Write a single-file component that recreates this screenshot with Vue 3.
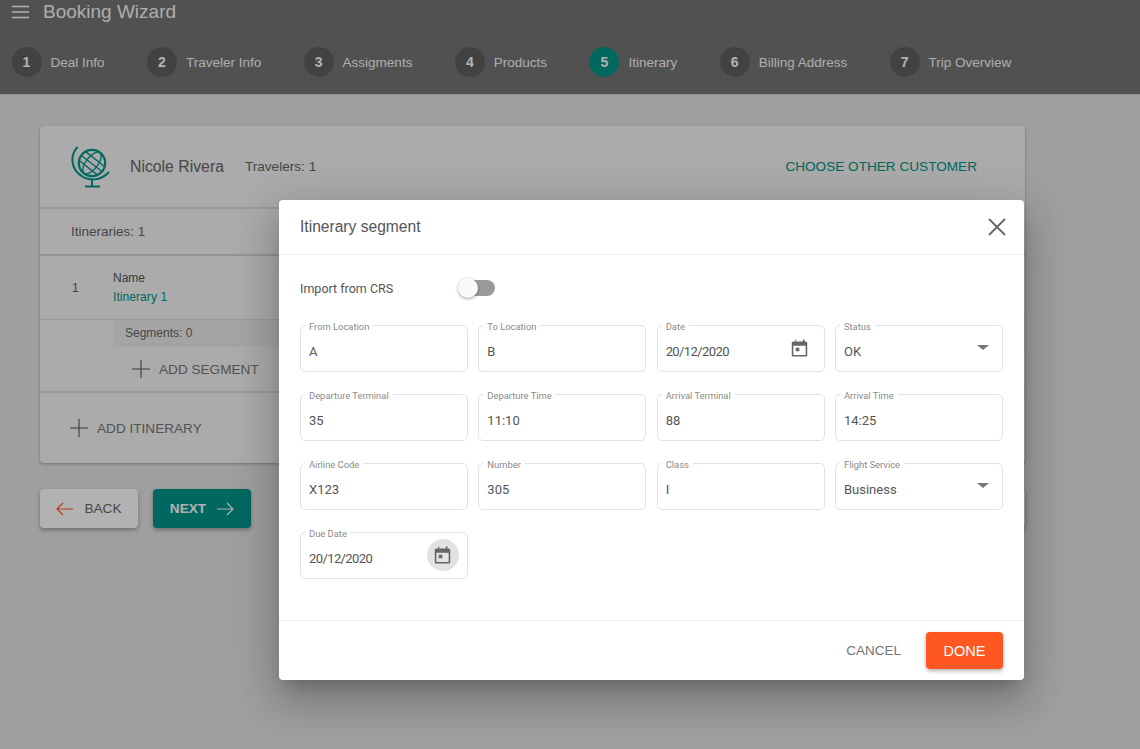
<template>
  <div class="page">
    <header class="topbar">
      <div class="title-row">
        <svg class="menu-icon" width="18" height="14" viewBox="0 0 18 14">
          <path d="M0 1.5h17M0 7h17M0 12.5h17" stroke="#fff" stroke-width="1.6" fill="none" />
        </svg>
        <span class="app-title">Booking Wizard</span>
      </div>
      <nav class="steps">
        <div v-for="(step, i) in steps" :key="step" class="step" :class="{ active: i === 4 }">
          <span class="step-num">{{ i + 1 }}</span>
          <span class="step-label">{{ step }}</span>
        </div>
      </nav>
    </header>

    <main class="content">
      <section class="card">
        <div class="customer">
          <svg class="globe" width="40" height="42" viewBox="0 0 40 42" fill="none" stroke="#009688">
            <circle cx="21" cy="17" r="13.2" stroke-width="2.2" />
            <g stroke-width="1.3" transform="rotate(38 21 17)">
              <ellipse cx="21" cy="17" rx="6" ry="13" />
              <path d="M8.5 12h25M8 17.5h26M9 23h24" />
            </g>
            <path d="M6.5 1C-1 9 0 21 8 28c9 8 22 7 30-2" stroke-width="2" />
            <path d="M21 34v6M14 40.5h15" stroke-width="2" />
          </svg>
          <span class="customer-name">Nicole Rivera</span>
          <span class="travelers">Travelers: 1</span>
          <a class="choose-link">CHOOSE OTHER CUSTOMER</a>
        </div>
        <div class="itineraries-head">Itineraries: 1</div>
        <div class="itinerary">
          <span class="itinerary-index">1</span>
          <div>
            <div class="itinerary-key">Name</div>
            <div class="itinerary-name">Itinerary 1</div>
          </div>
        </div>
        <div class="segments">Segments: 0</div>
        <button class="flat-btn add-segment">
          <svg width="18" height="18" viewBox="0 0 18 18"><path d="M9 0v18M0 9h18" stroke="#555" stroke-width="1.1" /></svg>
          ADD SEGMENT
        </button>
        <button class="flat-btn add-itinerary">
          <svg width="18" height="18" viewBox="0 0 18 18"><path d="M9 0v18M0 9h18" stroke="#555" stroke-width="1.1" /></svg>
          ADD ITINERARY
        </button>
      </section>

      <div class="nav-buttons">
        <button class="nav-btn back">
          <svg width="18" height="14" viewBox="0 0 18 14" fill="none"><path d="M17 7H1M7 1L1 7l6 6" stroke="#ff5722" stroke-width="1.2" /></svg>
          BACK
        </button>
        <button class="nav-btn next">
          NEXT
          <svg width="18" height="14" viewBox="0 0 18 14" fill="none"><path d="M1 7h16M11 1l6 6-6 6" stroke="#fff" stroke-width="1.2" /></svg>
        </button>
        <button class="nav-btn behind"></button>
      </div>
    </main>

    <div class="scrim">
      <div class="dialog">
        <div class="dialog-head">
          <span>Itinerary segment</span>
          <svg width="18" height="18" viewBox="0 0 18 18"><path d="M1 1l16 16M17 1L1 17" stroke="#666" stroke-width="1.8" /></svg>
        </div>
        <div class="dialog-body">
          <div class="import-row">
            <span class="import-label">Import from CRS</span>
            <span class="switch"><span class="switch-thumb"></span></span>
          </div>
          <div class="form-grid">
            <div v-for="f in fields" :key="f.label" class="field">
              <span class="field-label">{{ f.label }}</span>
              <span class="field-value" :class="{ 'date-value': f.icon === 'date' }">{{ f.value }}</span>
              <span v-if="f.icon === 'date'" class="field-icon" :class="{ focused: f.focused }">
                <svg width="17" height="18" viewBox="0 0 18 19">
                  <path fill="#666" d="M15.5 2.5h-1.2V.5h-1.8v2h-7v-2H4.600v2H2.500C1.500 2.500.8 3.300.8 4.300v12.500c0 1 .7 1.700 1.700 1.700h13c1 0 1.700-.7 1.700-1.700V4.300c0-1-.7-1.800-1.700-1.800zm0 14.300h-13V7h13v9.800zM5 9.200h3.800v3.800H5z" />
                </svg>
              </span>
              <span v-if="f.icon === 'select'" class="field-arrow"></span>
            </div>
          </div>
        </div>
        <div class="dialog-foot">
          <button class="cancel">CANCEL</button>
          <button class="done">DONE</button>
        </div>
      </div>
    </div>
  </div>
</template>

<script setup>
const steps = ['Deal Info', 'Traveler Info', 'Assigments', 'Products', 'Itinerary', 'Billing Address', 'Trip Overview']

const fields = [
  { label: 'From Location', value: 'A' },
  { label: 'To Location', value: 'B' },
  { label: 'Date', value: '20/12/2020', icon: 'date' },
  { label: 'Status', value: 'OK', icon: 'select' },
  { label: 'Departure Terminal', value: '35' },
  { label: 'Departure Time', value: '11:10' },
  { label: 'Arrival Terminal', value: '88' },
  { label: 'Arrival Time', value: '14:25' },
  { label: 'Airline Code', value: 'X123' },
  { label: 'Number', value: '305' },
  { label: 'Class', value: 'I' },
  { label: 'Flight Service', value: 'Business', icon: 'select' },
  { label: 'Due Date', value: '20/12/2020', icon: 'date', focused: true }
]
</script>

<style>
html,
body {
  margin: 0;
  height: 100%;
  overflow: hidden;
}
</style>

<style scoped>
.page {
  position: relative;
  height: 749px;
  overflow: hidden;
  background: #e4e4e4;
  font-family: "Liberation Sans", Arial, sans-serif;
  color: #333;
}

.topbar {
  height: 95px;
  background: #747474;
  color: #fff;
  box-sizing: border-box;
  border-bottom: 1px solid #cfcfcf;
}

.title-row {
  height: 24px;
  display: flex;
  align-items: center;
  gap: 13px;
  padding-left: 12px;
}

.menu-icon {
  flex: none;
}

.app-title {
  font-size: 19px;
  opacity: 0.95;
}

.steps {
  display: flex;
  gap: 42.4px;
  padding: 23px 0 0 11.5px;
}

.step {
  display: flex;
  align-items: center;
  gap: 9px;
}

.step-num {
  width: 30px;
  height: 30px;
  border-radius: 50%;
  background: #5f5f5f;
  display: flex;
  align-items: center;
  justify-content: center;
  font-size: 14px;
  font-weight: 700;
}

.step.active .step-num {
  background: #009688;
}

.step-label {
  font-size: 13.5px;
  opacity: 0.95;
}

.content {
  padding: 31px 115px 0 40px;
}

.card {
  background: #f5f5f5;
  border-radius: 4px;
  height: 337px;
  box-shadow: 0 1px 3px rgba(0, 0, 0, 0.3);
}

.customer {
  height: 83px;
  display: flex;
  align-items: center;
  padding: 0 48px 0 31px;
  border-bottom: 2px solid #dcdcdc;
  box-sizing: border-box;
}

.globe {
  flex: none;
  margin-right: 19px;
}

.customer-name {
  font-size: 15.8px;
  color: #666;
  margin-right: 21px;
}

.travelers {
  font-size: 13.6px;
  color: #666;
}

.choose-link {
  margin-left: auto;
  font-size: 13.6px;
  color: #009688;
}

.itineraries-head {
  height: 47px;
  line-height: 45px;
  padding-left: 31px;
  font-size: 13.5px;
  color: #666;
  border-bottom: 2px solid #d4d4d4;
  box-sizing: border-box;
}

.itinerary {
  height: 64px;
  display: flex;
  align-items: center;
  padding-left: 32px;
  font-size: 12px;
  color: #555;
  border-bottom: 1px solid #dcdcdc;
  box-sizing: border-box;
}

.itinerary-index {
  width: 41px;
}

.itinerary-key {
  margin-bottom: 5px;
}

.itinerary-name {
  color: #009688;
  font-size: 12.2px;
}

.segments {
  margin-left: 73px;
  height: 27px;
  line-height: 27px;
  padding-left: 12px;
  font-size: 12px;
  color: #666;
  background: #ebebeb;
}

.flat-btn {
  display: flex;
  align-items: center;
  border: 0;
  background: none;
  padding: 0;
  font-family: inherit;
  font-size: 13.6px;
  color: #777;
}

.add-segment {
  gap: 9px;
  height: 46px;
  width: 100%;
  padding-left: 92px;
  border-bottom: 2px solid #dcdcdc;
  box-sizing: border-box;
}

.add-itinerary {
  gap: 9px;
  height: 70px;
  padding-left: 30px;
}

.nav-buttons {
  display: flex;
  gap: 15px;
  margin-top: 26px;
}

.nav-btn {
  width: 98px;
  height: 39px;
  border: 0;
  border-radius: 4px;
  display: flex;
  align-items: center;
  justify-content: center;
  gap: 10px;
  font-family: inherit;
  font-size: 13.6px;
  box-shadow: 0 2px 4px rgba(0, 0, 0, 0.3);
}

.back {
  background: #fff;
  color: #666;
}

.next {
  background: #009688;
  color: #fff;
  font-weight: 700;
}

.behind {
  margin-left: auto;
  background: #f5f5f5;
}

.scrim {
  position: absolute;
  inset: 0;
  background: rgba(0, 0, 0, 0.3);
  padding: 200px 116px 0 279px;
  box-sizing: border-box;
}

.dialog {
  height: 480px;
  background: #fff;
  border-radius: 4px;
  display: flex;
  flex-direction: column;
  box-shadow: 0 11px 15px -7px rgba(0, 0, 0, 0.2), 0 24px 38px 3px rgba(0, 0, 0, 0.14), 0 9px 46px 8px rgba(0, 0, 0, 0.12);
}

.dialog-head {
  height: 55px;
  flex: none;
  display: flex;
  align-items: center;
  justify-content: space-between;
  padding: 0 18px 0 21px;
  font-size: 15.6px;
  color: #555;
  border-bottom: 1px solid #eee;
  box-sizing: border-box;
}

.dialog-body {
  flex: 1;
  padding: 0 21px;
  font-family: Roboto, sans-serif;
}

.import-row {
  height: 70px;
  padding-bottom: 4px;
  box-sizing: border-box;
  display: flex;
  align-items: center;
}

.import-label {
  width: 160px;
  font-size: 12.5px;
  color: #555;
}

.switch {
  position: relative;
  width: 35px;
  height: 16px;
  border-radius: 8px;
  background: #9a9a9a;
}

.switch-thumb {
  position: absolute;
  left: -2px;
  top: -2px;
  width: 20px;
  height: 20px;
  border-radius: 50%;
  background: #fafafa;
  box-shadow: 0 1px 3px rgba(0, 0, 0, 0.4);
}

.form-grid {
  display: grid;
  grid-template-columns: repeat(4, 168px);
  gap: 22.5px 10.33px;
}

.field {
  position: relative;
  height: 46.5px;
  border: 1px solid #e2e2e2;
  border-radius: 5px;
  box-sizing: border-box;
  display: flex;
  align-items: center;
  padding: 7px 8px 0;
}

.field-label {
  position: absolute;
  left: 4px;
  top: -5.5px;
  padding: 0 4px;
  background: #fff;
  font-size: 9.4px;
  line-height: 11px;
  color: #8a8a8a;
}

.field-value {
  font-size: 13px;
  color: #555;
}

.date-value {
  letter-spacing: -0.6px;
}

.field-icon {
  position: absolute;
  right: 8.5px;
  top: 5.5px;
  width: 32px;
  height: 32px;
  border-radius: 50%;
  display: flex;
  align-items: center;
  justify-content: center;
}

.field-icon.focused {
  background: #e2e2e2;
}

.field-arrow {
  position: absolute;
  right: 13px;
  top: 19px;
  border-left: 6px solid transparent;
  border-right: 6px solid transparent;
  border-top: 5px solid #757575;
}

.dialog-foot {
  height: 60px;
  flex: none;
  display: flex;
  align-items: center;
  justify-content: flex-end;
  gap: 25px;
  padding: 0 21px;
  border-top: 1px solid #f0f0f0;
  box-sizing: border-box;
}

.cancel {
  border: 0;
  background: none;
  padding: 0;
  font-family: inherit;
  font-size: 13.5px;
  color: #757575;
}

.done {
  width: 77px;
  height: 37px;
  border: 0;
  border-radius: 4px;
  background: #ff5722;
  color: #fff;
  font-family: inherit;
  font-size: 14.5px;
  box-shadow: 0 2px 4px rgba(0, 0, 0, 0.3);
}
</style>
